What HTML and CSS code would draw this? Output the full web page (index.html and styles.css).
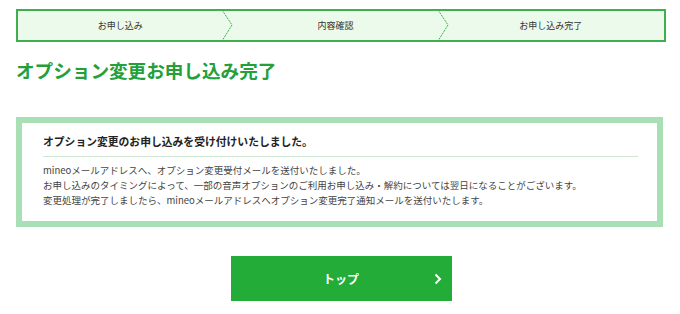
FILE: index.html
```html
<!DOCTYPE html>
<html lang="ja">
<head>
    <meta charset="UTF-8">
    <meta name="viewport" content="width=device-width, initial-scale=1.0">
    <title>オプション変更お申し込み完了</title>
    <link rel="stylesheet" href="styles.css">
</head>
<body>
    <div class="container">
        <ol class="steps">
            <li class="step">
                <span class="step-label">お申し込み</span>
                <svg class="step-arrow" width="11" height="31" viewBox="0 0 11 31">
                    <polyline points="0,0 10,15 0,31" fill="none" stroke="#3fae4c" stroke-width="1" stroke-dasharray="2 1"/>
                </svg>
            </li>
            <li class="step">
                <span class="step-label">内容確認</span>
                <svg class="step-arrow" width="11" height="31" viewBox="0 0 11 31">
                    <polyline points="0,0 10,15 0,31" fill="none" stroke="#3fae4c" stroke-width="1" stroke-dasharray="2 1"/>
                </svg>
            </li>
            <li class="step">
                <span class="step-label step-label-last">お申し込み完了</span>
            </li>
        </ol>

        <h1 class="page-title">オプション変更お申し込み完了</h1>

        <div class="notice">
            <h2 class="notice-title">オプション変更のお申し込みを受け付けいたしました。</h2>
            <p class="notice-text">
                mineoメールアドレスへ、オプション変更受付メールを送付いたしました。<br>
                お申し込みのタイミングによって、一部の音声オプションのご利用お申し込み・解約については翌日になることがございます。<br>
                変更処理が完了しましたら、mineoメールアドレスへオプション変更完了通知メールを送付いたします。
            </p>
        </div>

        <div class="actions">
            <a href="#" class="top-btn">
                <span>トップ</span>
                <svg class="top-btn-arrow" width="8" height="12" viewBox="0 0 8 12">
                    <polyline points="1.5,1.5 6,6 1.5,10.5" fill="none" stroke="#fff" stroke-width="2"/>
                </svg>
            </a>
        </div>
    </div>
</body>
</html>
```

FILE: styles.css
```css
body {
    font-family: "Noto Sans CJK JP", "Noto Sans", sans-serif;
    background-color: #fff;
    color: #333;
    margin: 0;
    padding: 9px 14px 0 16px;
}
.container {
    width: 650px;
}
.steps {
    display: flex;
    margin: 0;
    padding: 0;
    list-style: none;
    height: 29px;
    border: 2px solid #3fae4c;
    background-color: #ebfaea;
}
.step {
    flex: 1;
    display: flex;
    align-items: center;
}
.step-label {
    flex: 1;
    text-align: center;
    font-size: 9px;
    color: #333;
}
.step-label-last {
    margin-right: 11px;
}
.step-arrow {
    flex: none;
}
.page-title {
    margin: 15px 0 34px;
    font-size: 18.6px;
    line-height: 26px;
    font-weight: bold;
    color: #23a03a;
}
.notice {
    width: 647px;
    box-sizing: border-box;
    border: 6px solid #a9dfb4;
    padding: 10px 19px 13px 21px;
}
.notice-title {
    margin: 0;
    padding-bottom: 7px;
    border-bottom: 1px solid #cfe6d3;
    font-size: 10.8px;
    line-height: 16px;
    font-weight: bold;
    color: #222;
}
.notice-text {
    margin: 6px 0 0;
    font-size: 9.5px;
    line-height: 15px;
    color: #444;
}
.actions {
    display: flex;
    justify-content: center;
    margin-top: 29px;
}
.top-btn {
    position: relative;
    display: flex;
    align-items: center;
    justify-content: center;
    width: 221px;
    height: 45px;
    background-color: #23ac38;
    color: #fff;
    font-size: 12px;
    font-weight: bold;
    text-decoration: none;
}
.top-btn-arrow {
    position: absolute;
    right: 10px;
    top: 17px;
}
```
